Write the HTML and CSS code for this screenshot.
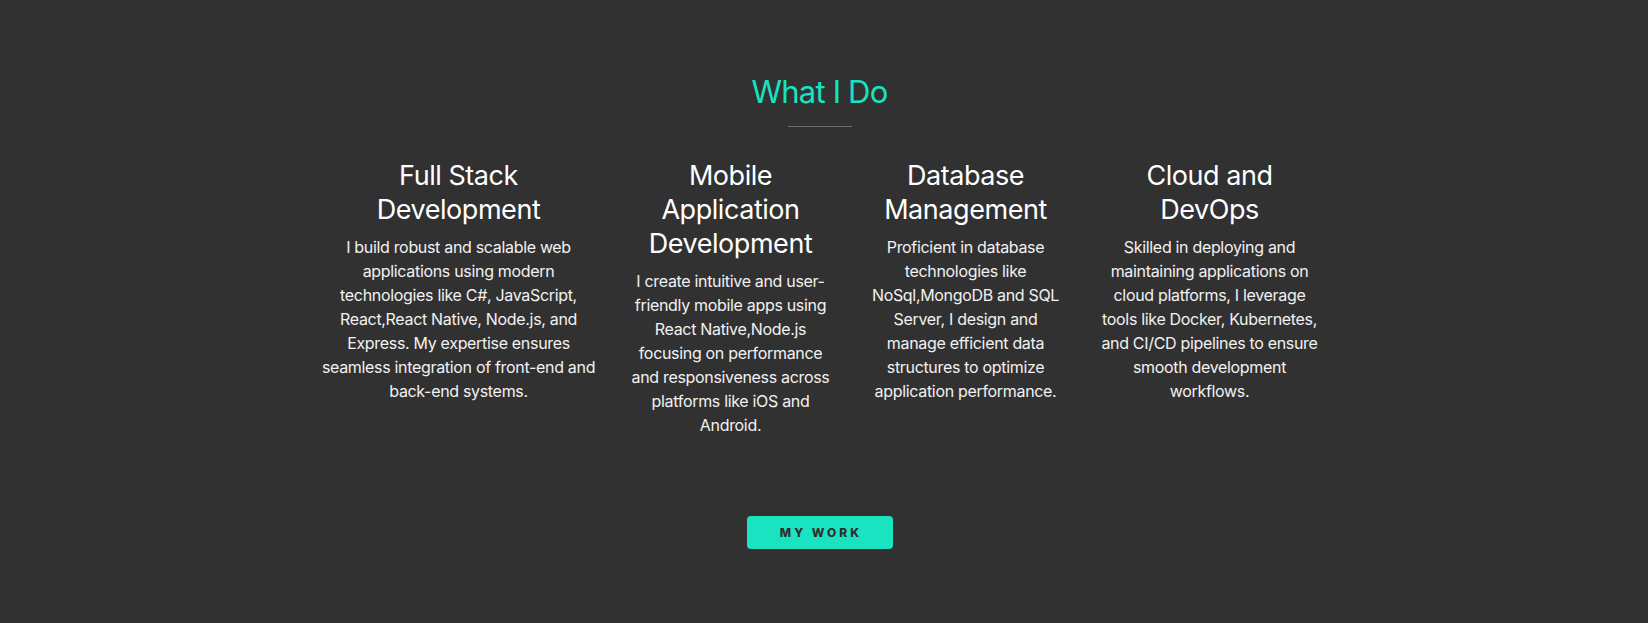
FILE: index.html
```html
<!DOCTYPE html>
<html lang="en">
<head>
<meta charset="utf-8">
<title>What I Do</title>
<link rel="stylesheet" href="styles.css">
</head>
<body>
<section class="services">
  <h2 class="services-title">What I Do</h2>
  <div class="divider"></div>
  <div class="cols">
    <div class="col col-stack">
      <h3 class="col-title">Full Stack Development</h3>
      <p class="col-text">I build robust and scalable web applications using modern technologies like C#, JavaScript, React,React Native, Node.js, and Express. My expertise ensures seamless integration of front-end and back-end systems.</p>
    </div>
    <div class="col col-mobile">
      <h3 class="col-title">Mobile Application Development</h3>
      <p class="col-text">I create intuitive and user-friendly mobile apps using React Native,Node.js focusing on performance and responsiveness across platforms like iOS and Android.</p>
    </div>
    <div class="col col-db">
      <h3 class="col-title">Database Management</h3>
      <p class="col-text">Proficient in database technologies like NoSql,MongoDB and SQL Server, I design and manage efficient data structures to optimize application performance.</p>
    </div>
    <div class="col col-cloud">
      <h3 class="col-title">Cloud and DevOps</h3>
      <p class="col-text">Skilled in deploying and maintaining applications on cloud platforms, I leverage tools like Docker, Kubernetes, and CI/CD pipelines to ensure smooth development workflows.</p>
    </div>
  </div>
  <div class="actions">
    <a class="btn" href="#">MY WORK</a>
  </div>
</section>
</body>
</html>
```

FILE: styles.css
```css
html, body {
  margin: 0;
  padding: 0;
  background: #313131;
}

body {
  font-family: Inter, "Noto Sans", "Liberation Sans", sans-serif;
  color: #ffffff;
  min-height: 623px;
}

.services {
  padding: 72px 9px 0 0;
  display: flex;
  flex-direction: column;
  align-items: center;
}

.services-title {
  margin: 0;
  font-size: 31px;
  line-height: 40px;
  font-weight: 400;
  letter-spacing: -0.8px;
  color: #19e3c1;
}

.divider {
  width: 64px;
  height: 1px;
  background: #6b6b6b;
  margin-top: 14px;
}

.cols {
  width: 1000px;
  display: flex;
  align-items: flex-start;
  margin-top: 32px;
}

.col {
  text-align: center;
}

.col-stack { width: 278px; }
.col-mobile { width: 204px; margin-left: 31px; }
.col-db { width: 192px; margin-left: 37px; }
.col-cloud { width: 220px; margin-left: 38px; }

.col-title {
  margin: 0 0 8px;
  font-size: 27px;
  line-height: 34px;
  font-weight: 400;
  letter-spacing: -0.45px;
  color: #ffffff;
}

.col-text {
  margin: 0;
  font-size: 16px;
  line-height: 24px;
  letter-spacing: -0.32px;
  color: #f2f2f2;
}

.actions {
  margin-top: 79px;
}

.btn {
  display: flex;
  align-items: center;
  justify-content: center;
  width: 146px;
  height: 33px;
  border-radius: 4px;
  background: #19e3c1;
  color: #2e2e2e;
  font-size: 12px;
  font-weight: 800;
  letter-spacing: 3px;
  text-decoration: none;
  padding-left: 3px;
  box-sizing: border-box;
}
```
